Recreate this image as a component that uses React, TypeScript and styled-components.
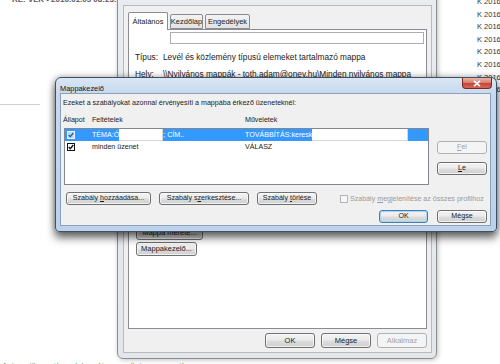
import React from "react";
import styled, { createGlobalStyle } from "styled-components";

const GlobalStyle = createGlobalStyle`
  html, body {
    margin: 0;
    padding: 0;
    background: #fff;
  }
  body {
    font-family: "Liberation Sans", Arial, sans-serif;
    font-size: 7.1px;
    color: #1b1b1b;
  }
  * {
    box-sizing: border-box;
  }
`;

const Desktop = styled.div`
  position: relative;
  width: 500px;
  height: 364px;
  overflow: hidden;
  background: #fff;
`;

/* the mail client behind both dialogs */
const BackPage = styled.div`
  display: flex;
  height: 100%;
`;

const BackMain = styled.div`
  flex: 0 0 477px;
  display: flex;
  flex-direction: column;
`;

const MailSubject = styled.div`
  margin-top: -5px;
  padding-left: 12px;
  font-size: 8px;
  font-weight: bold;
  color: #5a5a5a;
  white-space: nowrap;
`;

const BackRule = styled.div`
  margin-top: 100px;
  width: 40px;
  height: 1px;
  background: #cfcfcf;
`;

const GreenLink = styled.div`
  margin-top: auto;
  margin-bottom: -6px;
  padding-left: 2px;
  font-size: 8px;
  color: #3f9a3f;
  white-space: nowrap;
`;

const DateColumn = styled.div`
  display: flex;
  flex-direction: column;
  margin-top: -4px;
  line-height: 12.6px;
  font-size: 7.5px;
  color: #333;
  white-space: nowrap;
`;

/* properties window (inactive) */
const PropsWindow = styled.div`
  position: absolute;
  left: 117px;
  top: -26px;
  width: 320px;
  height: 385px;
  display: flex;
  padding: 30px 4px 5px 5px;
  border: 1px solid #8d8d8d;
  border-radius: 6px;
  background: linear-gradient(#e9ecf0, #e3e6ea);
  box-shadow: 1px 1px 5px rgba(0, 0, 0, 0.25);
`;

const PropsClient = styled.div`
  flex: 1;
  display: flex;
  flex-direction: column;
  padding: 6px 4px 4px 4px;
  border: 1px solid #b9b9b9;
  background: #f0f0f0;
  font-size: 7.5px;
`;

const TabRow = styled.div`
  display: flex;
  align-items: flex-end;
  gap: 2px;
  position: relative;
  z-index: 1;
`;

const Tab = styled.div<{ $active?: boolean; $w: number }>`
  width: ${(p) => p.$w}px;
  height: ${(p) => (p.$active ? 18 : 15)}px;
  margin-bottom: ${(p) => (p.$active ? -1 : 0)}px;
  display: flex;
  align-items: center;
  justify-content: center;
  border: 1px solid #898c95;
  border-bottom: ${(p) => (p.$active ? "none" : "1px solid #898c95")};
  border-radius: 2px 2px 0 0;
  background: ${(p) =>
    p.$active ? "#fff" : "linear-gradient(#f3f3f3, #e3e3e3)"};
`;

const TabPanel = styled.div`
  flex: 1;
  display: flex;
  flex-direction: column;
  border: 1px solid #898c95;
  background: #fff;
`;

const NameInput = styled.div`
  margin: 2px 2px 0 41px;
  height: 12px;
  border: 1px solid #abadb3;
  background: #fff;
`;

const InfoGrid = styled.div`
  margin: 9px 0 0 6px;
  display: grid;
  grid-template-columns: 28px 1fr;
  row-gap: 8px;
  line-height: 9px;
  font-size: 8.3px;
  white-space: nowrap;
`;

const PanelButtons = styled.div`
  margin: 147px 0 0 7px;
  display: flex;
  flex-direction: column;
  align-items: flex-start;
  gap: 2px;
`;

const Button = styled.button<{ $w: number; $h?: number; $primary?: boolean }>`
  width: ${(p) => p.$w}px;
  height: ${(p) => p.$h ?? 13}px;
  flex: none;
  padding: 0;
  font: inherit;
  line-height: 1;
  color: #1a1a1a;
  border: 1px solid ${(p) => (p.$primary ? "#3c7fb1" : "#707070")};
  border-radius: 3px;
  background: linear-gradient(#f2f2f2 0%, #ebebeb 48%, #dddddd 52%, #cfcfcf 100%);
  box-shadow: inset 0 0 0 1px
    ${(p) => (p.$primary ? "#a9d6f5" : "rgba(255, 255, 255, 0.7)")};
  white-space: nowrap;

  &:disabled {
    color: #a3a3a3;
    border-color: #adb2b5;
    background: #f4f4f4;
    box-shadow: none;
  }
`;

const PropsFooter = styled.div`
  margin-top: 4px;
  display: flex;
  justify-content: flex-end;
  gap: 6px;
`;

/* Mappakezelő dialog (active) */
const RulesWindow = styled.div`
  position: absolute;
  left: 55px;
  top: 77px;
  width: 442px;
  height: 155px;
  display: flex;
  flex-direction: column;
  padding: 0 5px 5px 4px;
  border: 1px solid #3e4f66;
  border-radius: 6px 6px 4px 4px;
  background: linear-gradient(#d9e6f4 0px, #c6d9ee 16px, #bcd2ea 100%);
  box-shadow: 0 6px 9px rgba(0, 0, 0, 0.55), 0 0 7px rgba(0, 0, 0, 0.35);
  z-index: 2;
`;

const TitleBar = styled.div`
  height: 15px;
  flex: none;
  display: flex;
  align-items: flex-start;
`;

const TitleText = styled.span`
  margin-top: 6px;
  font-size: 7.4px;
  color: #111;
`;

const CloseButton = styled.div`
  margin-left: auto;
  margin-right: -1px;
  width: 30px;
  height: 11px;
  display: flex;
  align-items: center;
  justify-content: center;
  border: 1px solid #7a2a22;
  border-top: none;
  border-radius: 0 0 4px 4px;
  background: linear-gradient(#eab3a8 0%, #d98272 45%, #c7453a 55%, #d4685a 100%);
`;

const RulesClient = styled.div`
  flex: 1;
  display: flex;
  flex-direction: column;
  padding: 5px 3px 2px 2px;
  border: 1px solid #8aa0ba;
  background: #f0f0f0;
`;

const Intro = styled.div`
  line-height: 9px;
  white-space: nowrap;
`;

const ColumnHeads = styled.div`
  margin-top: 8px;
  display: grid;
  grid-template-columns: 29px 153px 1fr;
  line-height: 9px;
`;

const ListArea = styled.div`
  margin-top: 3px;
  display: flex;
  gap: 8px;
  padding-left: 1px;
`;

const ListBox = styled.div`
  width: 366px;
  height: 57px;
  border: 1px solid #828790;
  background: #fff;
`;

const RuleRow = styled.div<{ $selected?: boolean }>`
  height: 12px;
  display: grid;
  grid-template-columns: 27px 153px 1fr;
  align-items: center;
  background: ${(p) => (p.$selected ? "#3399ff" : "transparent")};
  color: ${(p) => (p.$selected ? "#fff" : "#1a1a1a")};
  white-space: nowrap;
  overflow: hidden;
`;

const Cell = styled.span`
  display: flex;
  align-items: center;
  height: 12px;
  overflow: hidden;
`;

const Redact = styled.span<{ $width: number }>`
  flex: none;
  width: ${(p) => p.$width}px;
  height: 12px;
  background: #fff;
  border: 1px solid #d6d6d6;
  border-left: none;
  border-top: none;
`;

const CheckBox = styled.span<{ $tone: "selected" | "normal" | "disabled" }>`
  margin-left: 2px;
  flex: none;
  width: 8px;
  height: 8px;
  display: inline-flex;
  align-items: center;
  justify-content: center;
  border: 1px solid
    ${(p) =>
      p.$tone === "selected" ? "#e8f3fd" : p.$tone === "normal" ? "#111" : "#b4b4b4"};
  background: ${(p) =>
    p.$tone === "selected" ? "#bcdcf8" : p.$tone === "normal" ? "#fff" : "#f7f7f7"};
`;

const SideButtons = styled.div`
  padding-top: 13px;
  display: flex;
  flex-direction: column;
  gap: 8px;
`;

const ActionRow = styled.div`
  margin-top: 7px;
  padding-left: 3px;
  display: flex;
  align-items: center;
  gap: 8px;
`;

const ShareOption = styled.label`
  margin-left: 13px;
  display: flex;
  align-items: center;
  gap: 2px;
  color: #9a9a9a;
  white-space: nowrap;
`;

const DialogFooter = styled.div`
  margin-top: 5px;
  display: flex;
  justify-content: flex-end;
  gap: 9px;
`;

const Tick = ({ color }: { color: string }) => (
  <svg width="6" height="6" viewBox="0 0 6 6">
    <path d="M0.7 3.1 L2.3 4.8 L5.3 1" fill="none" stroke={color} strokeWidth="1.4" />
  </svg>
);

const dates = ["K 2016", "K 2016", "K 2016", "K 2016", "K 2016", "K 2016", "K 2016", "K 2016"];

export default function App() {
  return (
    <>
      <GlobalStyle />
      <Desktop>
        <BackPage>
          <BackMain>
            <MailSubject>RE: VLK - 2016.01.05 08:23:17 válasz</MailSubject>
            <BackRule />
            <GreenLink>Automatikus válaszok kezelése a nyilvános mappában</GreenLink>
          </BackMain>
          <DateColumn>
            {dates.map((d, i) => (
              <span key={i}>{d}</span>
            ))}
          </DateColumn>
        </BackPage>

        <PropsWindow>
          <PropsClient>
            <TabRow>
              <Tab $active $w={40}>Általános</Tab>
              <Tab $w={33}>Kezdőlap</Tab>
              <Tab $w={45}>Engedélyek</Tab>
            </TabRow>
            <TabPanel>
              <NameInput />
              <InfoGrid>
                <span>Típus:</span>
                <span>Levél és közlemény típusú elemeket tartalmazó mappa</span>
                <span>Hely:</span>
                <span>\\Nyilvános mappák - toth.adam@onev.hu\Minden nyilvános mappa</span>
              </InfoGrid>
              <PanelButtons>
                <Button $w={67} $h={14}>Mappa mérete...</Button>
                <Button $w={61} $h={14}>Mappakezelő...</Button>
              </PanelButtons>
            </TabPanel>
            <PropsFooter>
              <Button $w={50} $h={15}>OK</Button>
              <Button $w={50} $h={15}>Mégse</Button>
              <Button $w={50} $h={15} disabled>Alkalmaz</Button>
            </PropsFooter>
          </PropsClient>
        </PropsWindow>

        <RulesWindow>
          <TitleBar>
            <TitleText>Mappakezelő</TitleText>
            <CloseButton>
              <svg width="8" height="7" viewBox="0 0 8 7">
                <path d="M1 0.8 L7 6.2 M7 0.8 L1 6.2" stroke="#fff" strokeWidth="1.6" />
              </svg>
            </CloseButton>
          </TitleBar>
          <RulesClient>
            <Intro>Ezeket a szabályokat azonnal érvényesíti a mappába érkező üzeneteknél:</Intro>
            <ColumnHeads>
              <span>Állapot</span>
              <span>Feltételek</span>
              <span>Műveletek</span>
            </ColumnHeads>
            <ListArea>
              <ListBox>
                <RuleRow $selected>
                  <Cell>
                    <CheckBox $tone="selected">
                      <Tick color="#2a63a8" />
                    </CheckBox>
                  </Cell>
                  <Cell>
                    TÉMA:Ó
                    <Redact $width={44} />
                    ; CÍM..
                  </Cell>
                  <Cell>
                    TOVÁBBÍTÁS:keresk
                    <Redact $width={96} />
                  </Cell>
                </RuleRow>
                <RuleRow>
                  <Cell>
                    <CheckBox $tone="normal">
                      <Tick color="#111" />
                    </CheckBox>
                  </Cell>
                  <Cell>minden üzenet</Cell>
                  <Cell>VÁLASZ</Cell>
                </RuleRow>
              </ListBox>
              <SideButtons>
                <Button $w={50} disabled>
                  <u>F</u>el
                </Button>
                <Button $w={50}>
                  <u>L</u>e
                </Button>
              </SideButtons>
            </ListArea>
            <ActionRow>
              <Button $w={85}>
                Szabály <u>h</u>ozzáadása...
              </Button>
              <Button $w={90}>
                Szabály s<u>z</u>erkesztése...
              </Button>
              <Button $w={60}>
                Szabály <u>t</u>örlése
              </Button>
              <ShareOption>
                <CheckBox $tone="disabled" />
                <span>
                  Szabály <u>m</u>egjelenítése az összes profilhoz
                </span>
              </ShareOption>
            </ActionRow>
            <DialogFooter>
              <Button $w={49} $primary>OK</Button>
              <Button $w={50}>Mégse</Button>
            </DialogFooter>
          </RulesClient>
        </RulesWindow>
      </Desktop>
    </>
  );
}
